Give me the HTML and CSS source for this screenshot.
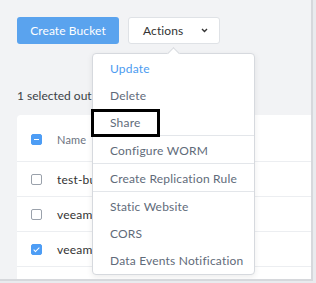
FILE: index.html
```html
<!DOCTYPE html>
<html lang="en">
<head>
  <meta charset="UTF-8">
  <meta name="viewport" content="width=device-width, initial-scale=1.0">
  <title>Buckets</title>
  <link rel="stylesheet" href="styles.css">
</head>
<body>
  <div class="frame">
    <div class="toolbar">
      <button class="btn btn-primary">Create Bucket</button>
      <button class="btn btn-actions">
        Actions
        <svg class="chevron" width="7" height="5" viewBox="0 0 7 5"><path d="M1 1 L3.5 3.5 L6 1" fill="none" stroke="#333" stroke-width="1.4"/></svg>
      </button>
    </div>

    <div class="summary">1 selected out of 4 buckets</div>

    <div class="table">
      <div class="row header">
        <span class="check indeterminate"></span>
        <span class="cell">Name</span>
      </div>
      <div class="row">
        <span class="check"></span>
        <span class="cell">test-bucket</span>
      </div>
      <div class="row">
        <span class="check"></span>
        <span class="cell">veeam-backup</span>
      </div>
      <div class="row">
        <span class="check checked"></span>
        <span class="cell">veeam-archive</span>
      </div>
      <div class="row">
        <span class="check"></span>
      </div>
    </div>

    <div class="menu">
      <div class="menu-group">
        <div class="menu-item active">Update</div>
        <div class="menu-item">Delete</div>
        <div class="menu-item">Share</div>
      </div>
      <div class="menu-group">
        <div class="menu-item">Configure WORM</div>
      </div>
      <div class="menu-group">
        <div class="menu-item">Create Replication Rule</div>
      </div>
      <div class="menu-group">
        <div class="menu-item">Static Website</div>
        <div class="menu-item">CORS</div>
        <div class="menu-item">Data Events Notification</div>
      </div>
    </div>

    <div class="highlight"></div>
  </div>
</body>
</html>
```

FILE: styles.css
```css
body {
  margin: 0;
  background-color: #e9ebee;
  font-family: Lato, "Liberation Sans", sans-serif;
  color: #333;
}

.frame {
  position: relative;
  width: 311px;
  height: 279px;
  overflow: hidden;
  background-color: #f2f3f5;
  border-right: 2px solid #d6d8dc;
  border-bottom: 2px solid #d6d8dc;
}

.toolbar {
  display: flex;
  gap: 9px;
  padding: 17px 17px 0;
}

.btn {
  height: 27px;
  border-radius: 3px;
  font-family: inherit;
  font-size: 12px;
  letter-spacing: 0.1px;
  padding: 0;
  cursor: pointer;
}

.btn-primary {
  width: 102px;
  background-color: #5aa3ee;
  color: white;
  border: none;
}

.btn-actions {
  width: 92px;
  background-color: white;
  color: #333;
  border: 1px solid #dfe2e6;
  display: flex;
  align-items: center;
  padding-left: 14px;
}

.chevron {
  margin-left: 18px;
}

.summary {
  margin-top: 44px;
  padding-left: 17px;
  white-space: nowrap;
  font-size: 12px;
  line-height: 16px;
  color: #3b3f45;
}

.table {
  margin: 11px 0 0 17px;
  background-color: white;
  border-radius: 4px 0 0 0;
}

.row {
  display: flex;
  align-items: center;
  height: 34px;
  border-bottom: 1px solid #eceef1;
  padding-left: 14px;
  font-size: 12px;
  letter-spacing: 0.2px;
}

.row.header {
  padding-top: 2px;
  box-sizing: border-box;
  height: 47px;
}

.row.header .cell {
  color: #6b7280;
  font-size: 11px;
}

.cell {
  margin-left: 15px;
  white-space: nowrap;
}

.check {
  width: 11px;
  height: 11px;
  box-sizing: border-box;
  border: 1px solid #9aa1ab;
  border-radius: 2px;
  position: relative;
  flex: none;
}

.check.indeterminate,
.check.checked {
  background-color: #4d9df5;
  border-color: #4d9df5;
}

.check.indeterminate::after {
  content: "";
  position: absolute;
  left: 2px;
  top: 4px;
  width: 5px;
  height: 1.5px;
  background-color: white;
}

.check.checked::after {
  content: "";
  position: absolute;
  left: 3px;
  top: 1px;
  width: 2px;
  height: 5px;
  border-right: 1.5px solid white;
  border-bottom: 1.5px solid white;
  transform: rotate(45deg);
}

.menu {
  position: absolute;
  left: 92px;
  top: 53px;
  width: 163px;
  height: 222px;
  box-sizing: border-box;
  background-color: white;
  border: 1px solid #d6d9de;
  border-radius: 4px;
  box-shadow: 0 2px 6px rgba(0, 0, 0, 0.08);
}

.menu::before {
  content: "";
  position: absolute;
  left: 76px;
  top: -5px;
  width: 8px;
  height: 8px;
  background-color: white;
  border-left: 1px solid #d6d9de;
  border-top: 1px solid #d6d9de;
  transform: rotate(45deg);
}

.menu-group {
  border-top: 1px solid #e3e6ea;
}

.menu-group:first-child {
  border-top: none;
}

.menu-item {
  height: 27px;
  line-height: 29px;
  padding-left: 17px;
  font-size: 12px;
  letter-spacing: 0.2px;
  color: #5f6b7a;
  white-space: nowrap;
}

.menu-item.active {
  color: #4b9bf0;
}

.highlight {
  position: absolute;
  left: 91px;
  top: 109px;
  width: 69px;
  height: 28px;
  box-sizing: border-box;
  border: 3px solid #000;
}
```
